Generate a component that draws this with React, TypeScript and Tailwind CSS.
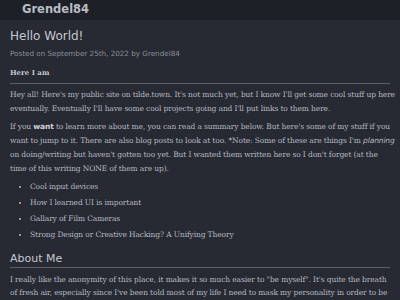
const serif = "font-['DejaVu_Serif',serif]";
const sans = "font-['DejaVu_Sans',sans-serif]";

const links = [
  'Cool input devices',
  'How I learned UI is important',
  'Gallary of Film Cameras',
  'Strong Design or Creative Hacking? A Unifying Theory',
];

export default function App() {
  return (
    <div className="min-h-screen w-full bg-[#272a33] text-[#b4b8c0]">
      {/* top bar */}
      <header className="h-[20px] bg-[#1e2028] flex items-center pl-[22px]">
        <span className={`${sans} font-bold text-[11.5px] text-[#b8bcc4] leading-none`}>Grendel84</span>
      </header>

      <main className="px-[10px] pt-[9px]">
        <h1 className={`${sans} text-[12px] leading-[14px] text-[#c4c8d0]`}>Hello World!</h1>
        <p className={`${sans} text-[7.2px] leading-[9px] text-[#8a8f99] mt-[5.5px]`}>Posted on September 25th, 2022 by Grendel84</p>

        <h3 className={`${serif} font-bold text-[7px] leading-[10px] text-[#c4c8d0] mt-[10.5px] pb-[5px] border-b border-[#5c606a]`}>Here I am</h3>

        <div className={`${serif} text-[7.5px] tracking-[-0.12px] leading-[14px] -mr-[6px]`}>
          <p className="mt-[4px]">
            Hey all! Here's my public site on tilde.town. It's not much yet, but I know I'll get some cool stuff up here
            eventually. Eventually I'll have some cool projects going and I'll put links to them here.
          </p>
          <p className="mt-[4px]">
            If you <b className={`${sans} text-[#d0d4da]`}>want</b> to learn more about me, you can read a summary below. But here's some of my stuff if you
            want to jump to it. There are also blog posts to look at too. *Note: Some of these are things I'm <i className={sans}>planning</i>{' '}
            on doing/writing but haven't gotten too yet. But I wanted them written here so I don't forget (at the time
            of this writing NONE of them are up).
          </p>
          <ul className="mt-[3px] pl-[20px] list-disc">
            {links.map((l) => (
              <li key={l} className="leading-[16px]">{l}</li>
            ))}
          </ul>
        </div>

        <h2 className={`${sans} text-[11px] leading-[13px] text-[#c4c8d0] mt-[8.5px] pb-[2px] border-b border-[#5c606a]`}>About Me</h2>
        <p className={`${serif} text-[7.5px] tracking-[-0.12px] leading-[13px] mt-[5.5px]`}>
          I really like the anonymity of this place, it makes it so much easier to "be myself". It's quite the breath of
          fresh air, especially since I've been told most of my life I need to mask my personality in order to be
          accepted.
        </p>
      </main>
    </div>
  );
}
